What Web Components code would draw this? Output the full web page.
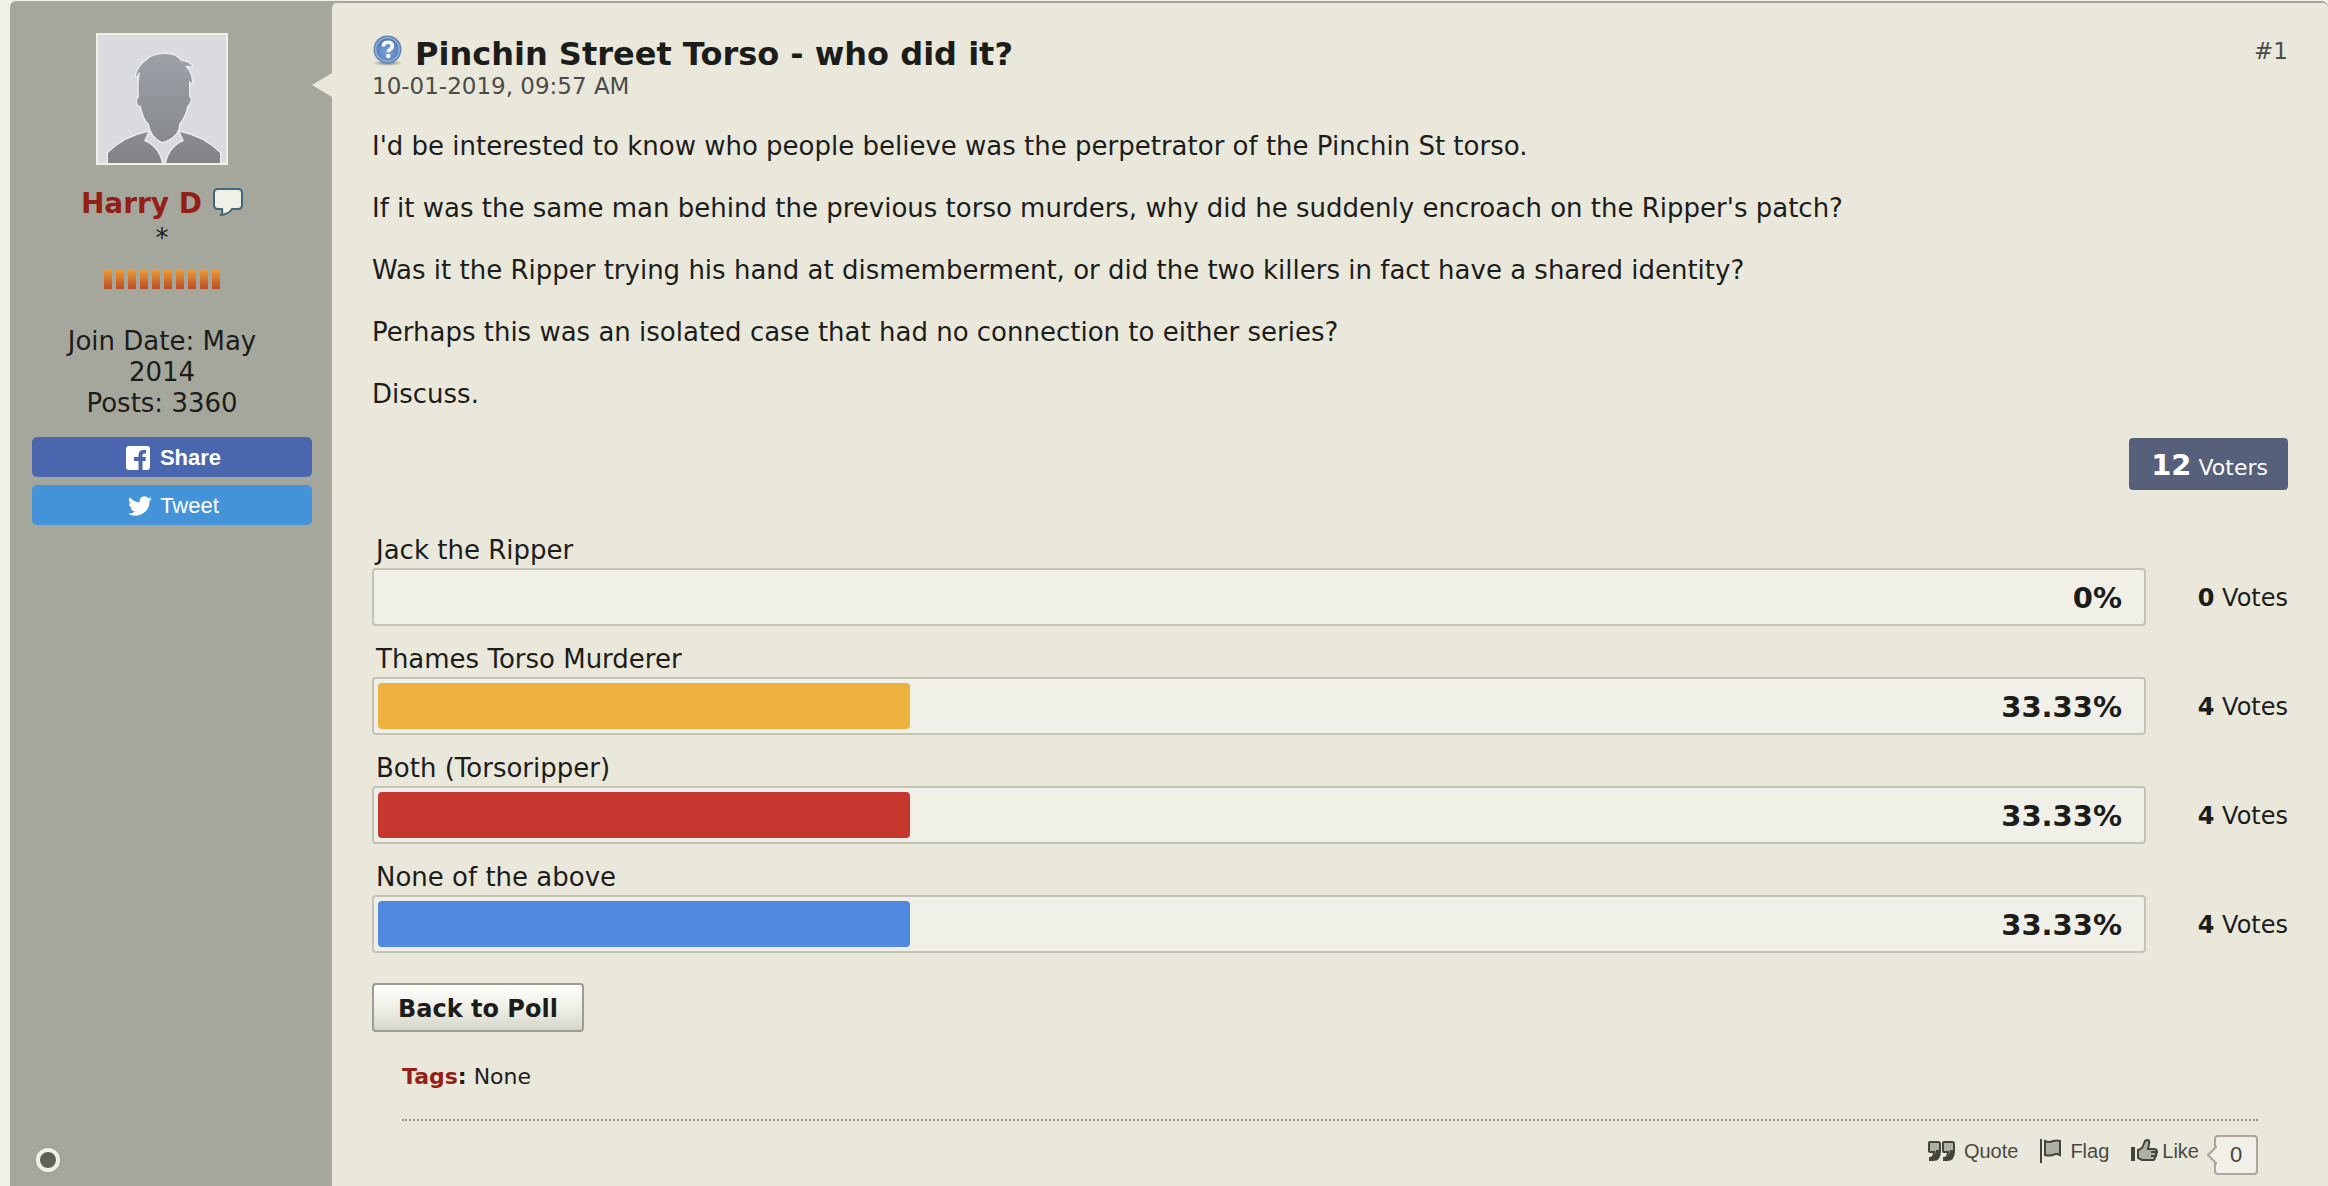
<!DOCTYPE html>
<html lang="en">
<head>
<meta charset="utf-8">
<title>Pinchin Street Torso - who did it?</title>
<style>
  body { margin: 0; background: #f0f0e8; color: #1c1d1b; font: 26px/31px "DejaVu Sans", Verdana, sans-serif; overflow-x: hidden;
    --panel: #e9e8db; --side: #a5a79c; --pale: #f0f0e8; --link: #931f16; }
  p { margin: 0; }
</style>
</head>
<body>
<forum-post number="#1" date="10-01-2019, 09:57 AM">
  <user-card slot="user" name="Harry D" rank="*" joined="May 2014" posts="3360">
    <share-button kind="share">Share</share-button>
    <share-button kind="tweet">Tweet</share-button>
  </user-card>
  <span slot="title">Pinchin Street Torso - who did it?</span>
  <p>I'd be interested to know who people believe was the perpetrator of the Pinchin St torso.</p>
  <p>If it was the same man behind the previous torso murders, why did he suddenly encroach on the Ripper's patch?</p>
  <p>Was it the Ripper trying his hand at dismemberment, or did the two killers in fact have a shared identity?</p>
  <p>Perhaps this was an isolated case that had no connection to either series?</p>
  <p>Discuss.</p>
  <poll-results slot="poll" voters="12">
    <poll-option votes="0" percent="0">Jack the Ripper</poll-option>
    <poll-option votes="4" percent="33.33" color="#ecb13e">Thames Torso Murderer</poll-option>
    <poll-option votes="4" percent="33.33" color="#c6372f">Both (Torsoripper)</poll-option>
    <poll-option votes="4" percent="33.33" color="#508be1">None of the above</poll-option>
  </poll-results>
  <post-footer slot="footer" tags="None" likes="0"></post-footer>
</forum-post>

<script>
class Base extends HTMLElement {
  connectedCallback() {
    if (!this.shadowRoot) this.attachShadow({ mode: "open" }).innerHTML = this.render();
  }
  attr(name) { return this.getAttribute(name) || ""; }
}

customElements.define("forum-post", class extends Base {
  render() {
    return `
    <style>
      :host { display: block; padding-top: 1px; }
      article { box-sizing: border-box; display: flex; margin-left: 10px; min-height: calc(100vh - 1px); padding-top: 2px; background: var(--side); border-radius: 6px 6px 0 0; }
      aside { display: flex; flex: 0 0 322px; }
      main { position: relative; flex: 1; min-width: 0; padding: 32px 40px 0; background: var(--panel); border-radius: 5px 5px 0 0; }
      .arrow { position: absolute; left: -20px; top: 70px; width: 20px; height: 24px; fill: var(--panel); }
      header { display: flex; justify-content: space-between; margin-bottom: 32px; }
      h1 { display: flex; gap: 12px; margin: 0; font-size: 32px; line-height: 38px; }
      h1 svg { width: 31px; height: 31px; }
      time { display: block; font-size: 23px; line-height: 26px; color: #4b4c49; }
      a { font-size: 23px; line-height: 32px; color: #4b4c49; text-decoration: none; }
      .body { display: grid; gap: 31px; margin-bottom: 28px; }
    </style>
    <article>
      <aside><slot name="user"></slot></aside>
      <main>
        <svg class="arrow" viewBox="0 0 20 24"><path d="M20 0 0 12l20 12z"/></svg>
        <header>
          <div>
            <h1><svg viewBox="0 0 31 31">
              <defs><radialGradient id="g" cx=".5" cy=".6" r=".6"><stop offset="0" stop-color="#7fa7db"/><stop offset="1" stop-color="#4b77b6"/></radialGradient>
              <radialGradient id="s"><stop offset="0" stop-color="#77786f"/><stop offset="1" stop-color="#77786f" stop-opacity="0"/></radialGradient></defs>
              <ellipse cx="15.500" cy="28" rx="15" ry="3" fill="url(#s)"/>
              <circle cx="15.500" cy="14.500" r="14" fill="#6484b2"/>
              <circle cx="15.500" cy="14.500" r="11.800" fill="url(#g)" stroke="#8fafdc" stroke-width="1.500"/>
              <path d="M11.300 11.500q0-4.300 4.500-4.300t4.500 3.800q0 2-2 3.300t-2 2.700" fill="none" stroke="#fff" stroke-width="3.500"/>
              <circle cx="16.300" cy="21" r="2.200" fill="#fff"/></svg><slot name="title"></slot></h1>
            <time>${this.attr("date")}</time>
          </div>
          <a href="#post1">${this.attr("number")}</a>
        </header>
        <div class="body"><slot></slot></div>
        <slot name="poll"></slot>
        <slot name="footer"></slot>
      </main>
    </article>`;
  }
});

customElements.define("user-card", class extends Base {
  render() {
    return `
    <style>
      :host { box-sizing: border-box; display: flex; flex-direction: column; flex: 1; padding: 30px 20px 14px 22px; }
      .info { display: flex; flex-direction: column; align-items: center; padding-right: 20px; text-align: center; }
      .avatar { width: 128px; height: 128px; border: 2px solid var(--pale); background: #dadbde; }
      .name { display: flex; align-items: center; gap: 11px; margin-top: 21px; font-size: 28px; line-height: 36px; font-weight: bold; }
      a { color: var(--link); text-decoration: none; }
      .name svg { width: 30px; height: 28px; margin-bottom: 4px; }
      .rank { line-height: 33px; }
      .bars { display: flex; gap: 4px; margin: 14px 0 37px; }
      .bars i { width: 8px; height: 20px; background: linear-gradient(#f09f38, #bb4c25); }
      .share { display: grid; gap: 8px; margin-top: 18px; }
      .status { width: 16px; height: 16px; margin: auto 0 0 4px; border: 4px solid var(--pale); border-radius: 50%; background: #5e6158; }
    </style>
    <div class="info">
      <svg class="avatar" viewBox="0 0 128 128">
        <defs><linearGradient id="a" x1="0" y1="18" x2="0" y2="128" gradientUnits="userSpaceOnUse"><stop offset="0" stop-color="#9da2a8"/><stop offset="1" stop-color="#828386"/></linearGradient></defs>
        <g fill="url(#a)" stroke="#e9eaec" stroke-width="3" paint-order="stroke">
          <path d="M10 129v-11Q26 102 50 97l-4 9q15 6 18 23zM122 129v-11Q106 102 82 97l4 9q-15 6-18 23z"/>
          <path d="M38 40q3-10 11-15 4-5 16-6 13-1 18 7 7 0 12 6-4-2-8-1 7 7 7 17l-3-2v16q3 1 1 5t-3 4q-1 9-8 18 0 13-17 18-11-5-13-18-6-6-8-18-4 0-4-5 0-3 2-4-1-14 1-25-3 2-4 5z"/>
        </g>
      </svg>
      <div class="name"><a href="#user">${this.attr("name")}</a>
        <svg viewBox="0 0 30 28"><path d="M5 1h20q4 0 4 4v12q0 4-4 4h-6q-3 5-11 6 2-3 1-6H5q-4 0-4-4V5q0-4 4-4z" fill="var(--pale)" stroke="#456878" stroke-width="2"/></svg></div>
      <div class="rank">${this.attr("rank")}</div>
      <div class="bars">${"<i></i>".repeat(10)}</div>
      <div>Join Date: ${this.attr("joined")}</div>
      <div>Posts: ${this.attr("posts")}</div>
    </div>
    <div class="share"><slot></slot></div>
    <div class="status"></div>`;
  }
});

customElements.define("share-button", class extends Base {
  render() {
    const share = this.attr("kind") === "share";
    const icon = share
      ? `<rect width="24" height="24" rx="3"/><path fill="#4966ae" d="M12.500 24v-9H8v-4h4.500V9q0-5 5-5H20v3.500h-2q-1.500 0-1.500 1.500v2H20l-.500 4h-3v9z"/>`
      : `<path d="M24 4.600a10 10 0 0 1-2.800.8 5 5 0 0 0 2.100-2.700 10 10 0 0 1-3.100 1.200 4.900 4.900 0 0 0-8.400 4.500A14 14 0 0 1 1.700 3.200a4.900 4.900 0 0 0 1.500 6.500 5 5 0 0 1-2.200-.6 4.900 4.900 0 0 0 3.900 4.900 5 5 0 0 1-2.200.1 4.900 4.900 0 0 0 4.600 3.400A10 10 0 0 1 0 19.500 14 14 0 0 0 21.500 7.100 10 10 0 0 0 24 4.600z"/>`;
    return `
    <style>
      :host { display: block; }
      button { display: flex; align-items: center; justify-content: center; gap: ${share ? 10 : 8}px; width: 100%; height: 40px; padding: 1px 0 0 3px; border: 0; border-radius: 5px; color: #fff;
        background: ${share ? "#4966ae" : "#4493d9"}; font: ${share ? "bold" : "normal"} 22px/26px "Liberation Sans", Arial, sans-serif; }
      svg { width: 24px; height: 24px; fill: #fff; }
    </style>
    <button type="button"><svg viewBox="0 0 24 24">${icon}</svg><span><slot></slot></span></button>`;
  }
});

customElements.define("poll-results", class extends Base {
  render() {
    return `
    <style>
      :host { display: flex; flex-direction: column; }
      .voters { align-self: flex-end; box-sizing: border-box; height: 52px; padding: 12px 20px 8px 22px; border-radius: 4px; background: #57607a; color: #fff; font-size: 22px; margin-bottom: 45px; }
      .voters b { font-size: 29px; }
      .options { display: grid; gap: 18px; margin-bottom: 30px; }
      button { align-self: flex-start; height: 49px; padding: 2px 24px 0; border: 2px solid #9b9d92; border-radius: 4px; color: inherit;
        background: linear-gradient(#fdfdfb, #f0f0e8 50%, #d5d6ca); font: bold 24px/30px "DejaVu Sans", Verdana, sans-serif; }
    </style>
    <div class="voters"><b>${this.attr("voters")}</b> Voters</div>
    <div class="options"><slot></slot></div>
    <button type="button">Back to Poll</button>`;
  }
});

customElements.define("poll-option", class extends Base {
  render() {
    const percent = this.attr("percent");
    return `
    <style>
      :host { display: block; }
      .label { padding-left: 4px; margin-bottom: 2px; }
      .row { display: flex; align-items: center; }
      .bar { box-sizing: border-box; flex: 1; display: flex; align-items: center; height: 58px; padding: 0 22px 0 4px; border: 2px solid #c4c4b6; border-radius: 4px; background: var(--pale); }
      .track { flex: 0 0 91.5%; }
      .fill { width: ${percent}%; height: 46px; border-radius: 4px; background: ${this.attr("color") || "none"}; }
      b { flex: 1; padding-top: 2px; text-align: right; font-size: 29px; }
      .votes { flex: 0 0 142px; padding-top: 2px; text-align: right; font-size: 24px; }
      .votes b { font-size: 24px; }
    </style>
    <div class="label"><slot></slot></div>
    <div class="row">
      <div class="bar"><div class="track"><div class="fill"></div></div><b>${percent}%</b></div>
      <div class="votes"><b>${this.attr("votes")}</b> Votes</div>
    </div>`;
  }
});

customElements.define("post-footer", class extends Base {
  render() {
    return `
    <style>
      :host { display: block; margin: 32px 30px 0; }
      .tags { padding-bottom: 29px; border-bottom: 2px dotted #93958a; font-size: 22px; line-height: 26px; }
      .tags span { color: var(--link); }
      nav { display: flex; justify-content: flex-end; align-items: flex-start; margin-top: 14px; font: 20px/24px "Liberation Sans", Arial, sans-serif; }
      button { display: flex; align-items: center; gap: 9px; margin: 4px 22px 0 0; padding: 0; border: 0; background: none; color: #484943; font: inherit; }
      button.like { gap: 4px; margin-right: 15px; }
      button svg { width: 27px; height: 24px; fill: #adb0a3; stroke: #43453a; stroke-width: 2; }
      button svg.flag { width: 21px; }
      .count { position: relative; box-sizing: border-box; width: 44px; height: 40px; border: 2px solid #aaa69a; border-radius: 4px; background: var(--pale); color: #43443f; font-size: 22px; line-height: 36px; text-align: center; text-decoration: none; }
      .count svg { position: absolute; left: -10px; top: 8px; width: 11px; height: 20px; fill: var(--pale); stroke: #aaa69a; stroke-width: 2; }
    </style>
    <div class="tags"><b><span>Tags</span>:</b> ${this.attr("tags")}</div>
    <nav>
      <button type="button"><svg viewBox="0 0 27 24"><g id="q"><path d="M2 3h8q2 0 2 2v7q0 9-7 9H2v-2q4 0 4-6H2q-1 0-1-1V4q0-1 1-1z"/><path d="M8 11h4q0 10-7 10H2v-2q5 0 6-8z" fill="#43453a" stroke="none"/></g><use href="#q" x="14"/></svg>Quote</button>
      <button type="button"><svg class="flag" viewBox="0 0 21 24"><path d="M1 0v24"/><path d="M5 2q4 2 8 0 4-1 7 0v14q-4-2-7 0-4 1-8 0z"/></svg>Flag</button>
      <button type="button" class="like"><svg viewBox="0 0 27 24"><path d="M0 8h4v14H0z" fill="#43453a" stroke="none"/><path d="M7 11q4-1 5-4l2-5q1-1 3-1 2 1 1 4l-1 5h6q3 0 3 3 0 1-1 2 1 2-1 3 0 3-2 3H11l-4-2z"/><path d="M20 13h6M20 17h5"/></svg>Like</button>
      <a class="count" href="#likes"><svg viewBox="0 0 11 20"><path d="M11 1 2 10l9 9"/></svg>${this.attr("likes")}</a>
    </nav>`;
  }
});
</script>
</body>
</html>
